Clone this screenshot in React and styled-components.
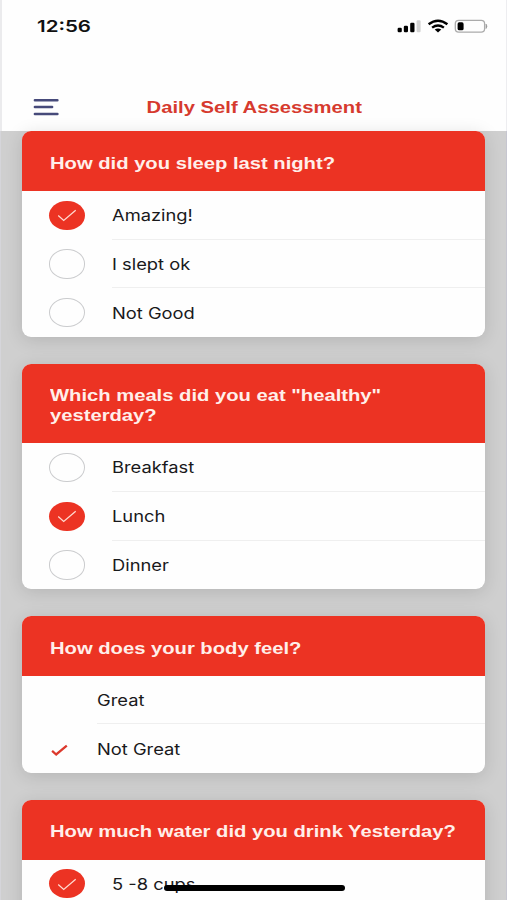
import React from "react";
import styled, { createGlobalStyle } from "styled-components";

const RED = "#ec3323";

const GlobalStyle = createGlobalStyle`
  * { box-sizing: border-box; }
  body { margin: 0; overflow: hidden; background: #cfcfcf; }
`;

const Screen = styled.div`
  width: 507px;
  height: 900px;
  overflow: hidden;
  position: relative;
  display: flex;
  flex-direction: column;
  background: #cfcfcf;
  font-family: Inter, "Liberation Sans", sans-serif;
`;

const TopBar = styled.header`
  flex: none;
  height: 131.4px;
  background: #fefefe;
  border-left: 2px solid #ebebed;
  border-right: 1px solid #ededf0;
  display: flex;
  flex-direction: column;
`;

const StatusBar = styled.div`
  height: 52px;
  padding: 0 18px 0 35px;
  display: flex;
  align-items: center;
  justify-content: space-between;
`;

const Wide = styled.span`
  display: inline-block;
  white-space: nowrap;
  transform: scaleX(${(p) => p.$stretch || 1.2});
  transform-origin: ${(p) => p.$origin || "left"} center;
`;

const Clock = styled.time`
  font-size: 16.4px;
  font-weight: 600;
  line-height: 20px;
  color: #111;
`;

const StatusIcons = styled.svg`
  display: block;
  width: 92px;
  height: 20px;
`;

const NavBar = styled.nav`
  flex: 1;
  display: grid;
  grid-template-columns: 60px 1fr 60px;
  align-items: center;
  padding-top: 31px;
`;

const MenuButton = styled.button`
  border: 0;
  padding: 0 0 0 31px;
  background: none;
  svg { display: block; }
`;

const Title = styled.h1`
  margin: 0;
  padding-top: 1px;
  text-align: center;
  font: 700 16.6px/20px "Liberation Sans", Arial, sans-serif;
  color: #d63a2e;
`;

const Survey = styled.main`
  flex: 1;
  display: flex;
  flex-direction: column;
  gap: 26.8px;
  padding: 0 20.6px 0 21.2px;
  border-left: 1px solid #d5d5da;
  border-right: 1px solid #c6c6d0;
`;

const Card = styled.section`
  flex: none;
  border-radius: 9px;
  overflow: hidden;
  background: #fefefe;
  box-shadow: 0 3px 18px rgba(0, 0, 0, 0.13);
`;

const Question = styled.h2`
  margin: 0;
  padding: 22.6px 0 17.1px 27.8px;
  background: ${RED};
  color: #ffefea;
  font: 700 17px/20px "Liberation Sans", Arial, sans-serif;
`;

const Options = styled.ul`
  list-style: none;
  margin: 0;
  padding: 0 0 0 27px;
  min-height: 90px;
`;

const Option = styled.li`
  height: 48.64px;
  display: flex;
  align-items: center;
  gap: 27.2px;
`;

const Radio = styled.span`
  flex: none;
  width: 35.4px;
  height: 29.2px;
  display: grid;
  place-items: center;
  border-radius: 50%;
  border: ${(p) => (p.$on ? "0" : "1.5px solid #cbccce")};
  background: ${(p) => (p.$on ? RED : "transparent")};
`;

const Tick = styled.span`
  flex: none;
  width: 20.4px;
  display: flex;
  padding: 3px 0 0 1.4px;
`;

const Label = styled.span`
  flex: 1;
  align-self: stretch;
  display: flex;
  align-items: center;
  padding-top: 2px;
  border-bottom: ${(p) => (p.$last ? "0" : "1px solid #efefef")};
  font-size: 15.6px;
  line-height: 20px;
  color: #19191b;
`;

const HomeIndicator = styled.div`
  position: absolute;
  left: 163.5px;
  top: 885.3px;
  width: 181px;
  height: 6px;
  border-radius: 3px;
  background: #000;
`;

const questions = [
  {
    lines: ["How did you sleep last night?"],
    options: [["Amazing!", true], ["I slept ok", false], ["Not Good", false]],
  },
  {
    lines: ['Which meals did you eat "healthy"', "yesterday?"],
    options: [["Breakfast", false], ["Lunch", true], ["Dinner", false]],
  },
  {
    plain: true,
    lines: ["How does your body feel?"],
    options: [["Great", false], ["Not Great", true]],
  },
  {
    lines: ["How much water did you drink Yesterday?"],
    options: [["5 -8 cups", true]],
  },
];

function Mark({ plain, on }) {
  if (plain) {
    return (
      <Tick>
        {on && (
          <svg width="17" height="13" viewBox="0 0 17 13">
            <path d="M1.1 6.8 5.2 10.5 15.8 1.7" fill="none" stroke="#dc392d" strokeWidth="2.3" />
          </svg>
        )}
      </Tick>
    );
  }
  return (
    <Radio $on={on}>
      {on && (
        <svg width="20" height="14" viewBox="0 0 20 14">
          <path d="M1.2 7.6 6.7 12.5 18.7 2.2" fill="none" stroke="#ffd9cf" strokeWidth="1.3" />
        </svg>
      )}
    </Radio>
  );
}

export default function App() {
  return (
    <Screen>
      <GlobalStyle />
      <TopBar>
        <StatusBar>
          <Clock><Wide $stretch={1.25}>12:56</Wide></Clock>
          <StatusIcons viewBox="396 16 92 20">
            <rect x="397.6" y="27.8" width="4.2" height="4.4" rx="1.3" fill="#000" />
            <rect x="403.8" y="25.8" width="4.2" height="6.4" rx="1.2" fill="#000" />
            <rect x="410.2" y="22.8" width="4.3" height="9.4" rx="1.2" fill="#000" />
            <rect x="416.6" y="20.2" width="4" height="12" rx="1.2" fill="#d2d2d2" />
            <g fill="none" stroke="#000" strokeWidth="2.4">
              <path d="M428.6 24.3Q438 17.1 447.4 24.3" />
              <path d="M432.1 27.6Q438 23.2 443.9 27.6" />
            </g>
            <path d="M434.7 29.6Q438 27.3 441.3 29.6L438 32.4Z" fill="#000" />
            <rect x="455.3" y="20.4" width="29.3" height="11.8" rx="3.4" fill="none" stroke="#ababab" strokeWidth="1.3" />
            <rect x="457.6" y="22.3" width="6" height="8" rx="1.6" fill="#000" />
            <path d="M486 24Q488 26.3 486 28.6Z" fill="#999" stroke="#999" strokeWidth=".6" />
          </StatusIcons>
        </StatusBar>
        <NavBar>
          <MenuButton aria-label="Menu">
            <svg width="28" height="18" viewBox="0 0 28 18">
              <g stroke="#464a7a" strokeWidth="2.5" strokeLinecap="round">
                <path d="M1.9 2.2H24.4M1.9 9.1H19.1M1.9 15.9H24.4" />
              </g>
            </svg>
          </MenuButton>
          <Title><Wide $stretch={1.22} $origin="center">Daily Self Assessment</Wide></Title>
        </NavBar>
      </TopBar>
      <Survey>
        {questions.map((q, n) => (
          <Card key={n}>
            <Question>
              {q.lines.map((text) => (
                <div key={text}><Wide $stretch={1.188}>{text}</Wide></div>
              ))}
            </Question>
            <Options>
              {q.options.map(([text, on], i) => (
                <Option key={text}>
                  <Mark plain={q.plain} on={on} />
                  <Label $last={i === q.options.length - 1}>
                    <Wide $stretch={1.175}>{text}</Wide>
                  </Label>
                </Option>
              ))}
            </Options>
          </Card>
        ))}
      </Survey>
      <HomeIndicator />
    </Screen>
  );
}
